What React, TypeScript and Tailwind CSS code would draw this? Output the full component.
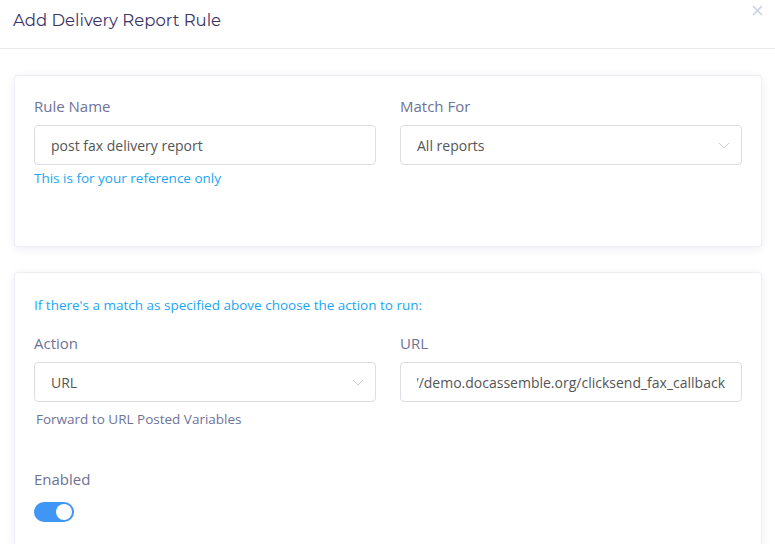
export default function App() {
  return (
    <div className="min-h-[544px] w-[775px] bg-white font-['Open_Sans',sans-serif]">
      <div className="relative h-[49px] border-b border-[#e6e8ef] px-[13px] pt-[9px]">
        <h2 className="font-['Montserrat','Inter',sans-serif] text-[16.5px] leading-[22px] font-normal text-[#3b3366]">
          Add Delivery Report Rule
        </h2>
        <button className="absolute right-[12px] top-[5px] text-[#c9d1e2]">
          <svg width="11" height="11" viewBox="0 0 11 11">
            <path d="M1 1 L10 10 M10 1 L1 10" stroke="currentColor" strokeWidth="1.6" />
          </svg>
        </button>
      </div>

      <div className="flex flex-col gap-[25px] pl-[14px] pr-[13px] pt-[26px]">
        <div className="rounded border border-[#eceef3] bg-white px-[19px] pb-[58px] pt-[19px] shadow-[0_2px_10px_rgba(30,40,80,0.08)]">
          <div className="grid grid-cols-2 gap-6">
            <div>
              <label className="block text-[15px] leading-[22px] text-[#6e7398]">Rule Name</label>
              <div className="mt-2 flex h-10 items-center rounded border border-[#dcdde7] px-4 text-[14px] text-[#555]">
                post fax delivery report
              </div>
              <div className="mt-[3px] text-[13.5px] leading-5 text-[#1ba6f3]">This is for your reference only</div>
            </div>
            <div>
              <label className="block text-[15px] leading-[22px] text-[#6e7398]">Match For</label>
              <Select value="All reports" />
            </div>
          </div>
        </div>

        <div className="rounded border border-[#eceef3] bg-white px-[19px] pb-6 pt-[22px] shadow-[0_2px_10px_rgba(30,40,80,0.08)]">
          <p className="text-[13.5px] leading-5 text-[#1ba6f3]">
            If there's a match as specified above choose the action to run:
          </p>
          <div className="mt-[17px] grid grid-cols-2 gap-6">
            <div>
              <label className="block text-[15px] leading-[22px] text-[#6e7398]">Action</label>
              <Select value="URL" />
              <div className="mt-[7px] pl-[2px] text-[13.5px] leading-5 text-[#6e7398]">
                Forward to URL Posted Variables
              </div>
            </div>
            <div>
              <label className="block text-[15px] leading-[22px] text-[#6e7398]">URL</label>
              <div className="mt-2 flex h-10 items-center rounded border border-[#dcdde7] px-4 text-[14px] text-[#555]">
                <div className="flex min-w-0 flex-1 justify-end overflow-hidden">
                  <span className="shrink-0 whitespace-nowrap">
                    http://demo.docassemble.org/clicksend_fax_callback
                  </span>
                </div>
              </div>
            </div>
          </div>
          <label className="mt-[39px] block text-[15px] leading-[22px] text-[#6e7398]">Enabled</label>
          <div className="mt-3 flex h-5 w-10 items-center justify-end rounded-full bg-[#3f96f5] px-[2px]">
            <span className="h-4 w-4 rounded-full bg-white" />
          </div>
        </div>
      </div>
    </div>
  );
}

function Select({ value }: { value: string }) {
  return (
    <div className="mt-2 flex h-10 items-center justify-between rounded border border-[#dcdde7] pl-4 pr-[11px] text-[14px] text-[#555]">
      <span>{value}</span>
      <svg width="12" height="7" viewBox="0 0 12 7">
        <path d="M1 1 L6 6 L11 1" fill="none" stroke="#c9cad4" strokeWidth="1" />
      </svg>
    </div>
  );
}
